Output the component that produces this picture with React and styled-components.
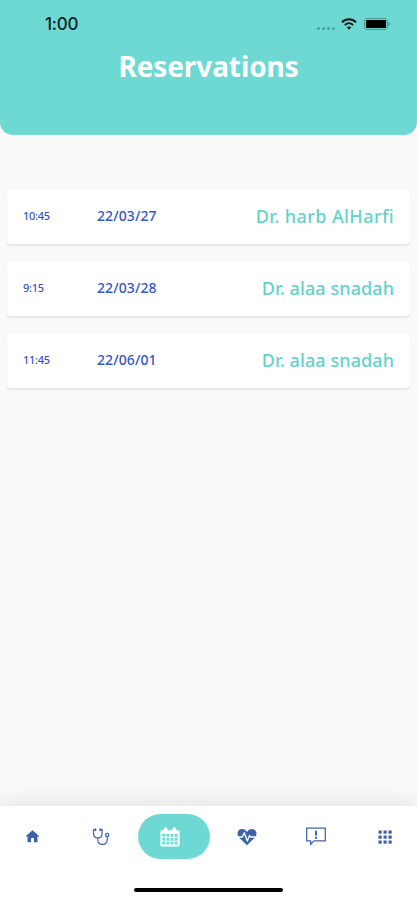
import React from 'react'
import styled, { createGlobalStyle } from 'styled-components'
import { MdHome } from 'react-icons/md'


const reservations = [
  { id: 1, time: '10:45', date: '22/03/27', doctor: 'Dr. harb AlHarfi', spacing: '0.4px' },
  { id: 2, time: '9:15', date: '22/03/28', doctor: 'Dr. alaa snadah', spacing: '0.08px' },
  { id: 3, time: '11:45', date: '22/06/01', doctor: 'Dr. alaa snadah', spacing: '0.08px' },
]

const StethoscopeIcon = () => (
  <svg width="18" height="18" viewBox="0 0 18 18" fill="none" stroke="currentColor" strokeWidth="1.2" strokeLinecap="round">
    <path d="M3.2 1.6H1.5v4c0 2.6 1.8 4.4 4.3 4.4s4.3-1.8 4.3-4.4v-4H8.4" />
    <path d="M5.8 10v2c0 2.7 1.7 4.4 4.7 4.4s4.7-1.7 4.7-4.4V8.6" />
    <circle cx="15.2" cy="7" r="1.6" />
    <path d="M3.5 1v1.5M8.2 1v1.5" strokeWidth="1.6" />
  </svg>
)

const CalendarIcon = () => (
  <svg width="20" height="21" viewBox="0 0 20 21" fill="currentColor">
    <path
      fillRule="evenodd"
      d="M2 4.2h1.600L4.200 2.200a1.700 1.700 0 0 1 3 0l.8 2h4l.8-2a1.700 1.700 0 0 1 3 0l.6 2H18a1.600 1.600 0 0 1 1.600 1.600v13.100a1.600 1.600 0 0 1-1.600 1.600H2A1.600 1.600 0 0 1 .4 18.900V5.800A1.600 1.600 0 0 1 2 4.200zM2.300 8v2.800h3V8zm4.100 0v2.800h3V8zm4.100 0v2.800h3V8zm4.100 0v2.800h3V8zM2.300 11.900v2.800h3v-2.800zm4.100 0v2.800h3v-2.800zm4.100 0v2.800h3v-2.800zm4.100 0v2.800h3v-2.800zM2.300 15.800v2.700h3v-2.700zm4.100 0v2.700h3v-2.700zm4.100 0v2.700h3v-2.700zm4.100 0v2.700h3v-2.700z"
    />
  </svg>
)

const HeartIcon = () => (
  <svg width="20" height="18" viewBox="0 0 20 18">
    <path fill="currentColor" d="M10 17.3 2 9.500C-1 5.800.9 1 5 1c2.200 0 3.900 1 5 3 1.100-2 2.800-3 5-3 4.100 0 6 4.800 3 8.500z" />
    <path fill="none" stroke="#fff" strokeWidth="1.3" strokeLinejoin="round" d="M1 9h4.300l2-4.200 3 8.200 2.200-5.600 1.100 1.600H19" />
  </svg>
)

const MessageIcon = () => (
  <svg width="20" height="19" viewBox="0 0 20 19" fill="none" stroke="currentColor">
    <path d="M.7 1.200h18.600v12.700H8.100L4.600 17.300v-3.400H.7z" strokeWidth="1.2" />
    <path d="M10 3.700v4.800M10 9.800v2" strokeWidth="2" />
  </svg>
)

const AppsIcon = () => (
  <svg width="14" height="14" viewBox="0 0 14 14" fill="currentColor">
    {[0.5, 5.5, 10.5].map((y) => [0.5, 5.5, 10.5].map((x) => (
      <rect key={`${x}-${y}`} x={x} y={y} width="3.2" height="3.2" />
    )))}
  </svg>
)

const WifiIcon = () => (
  <svg width="16" height="12" viewBox="0 0 16 12" fill="none" stroke="#0b1c1d">
    <path d="M1 4.200C5 .3 11 .3 15 4.200" strokeWidth="2" />
    <path d="M3.800 7c2.500-2.300 5.900-2.300 8.400 0" strokeWidth="1.8" />
    <path d="M8 11.700 5.700 9.300c1.300-1.200 3.300-1.200 4.600 0z" fill="#0b1c1d" stroke="none" />
  </svg>
)

const BatteryIcon = () => (
  <svg width="27" height="12" viewBox="0 0 27 12">
    <rect x=".6" y=".6" width="22.8" height="10.8" rx="2.5" fill="none" stroke="#48908d" />
    <rect x="2" y="2" width="20" height="8" rx="1" fill="#000" />
    <path d="M24.600 4c1.800.6 1.800 3.400 0 4z" fill="#48908d" />
  </svg>
)

const App = () => {
  return (
    <>
      <GlobalStyle />
      <Screen>
        <Header>
          <StatusBar>
            <Clock>1:00</Clock>
            <StatusIcons>
              <Signal><i /><i /><i /><i /></Signal>
              <WifiIcon />
              <BatteryIcon />
            </StatusIcons>
          </StatusBar>
          <Title>Reservations</Title>
        </Header>

        <List>
          {reservations.map(({ id, time, date, doctor, spacing }) => (
            <Card key={id}>
              <Time>{time}</Time>
              <DateText>{date}</DateText>
              <Doctor $spacing={spacing}>{doctor}</Doctor>
            </Card>
          ))}
        </List>

        <BottomBar>
          <Tabs>
            <Tab><MdHome size={17} /></Tab>
            <Tab><StethoscopeIcon /></Tab>
            <Tab $active><CalendarIcon /></Tab>
            <Tab><HeartIcon /></Tab>
            <Tab><MessageIcon /></Tab>
            <Tab><AppsIcon /></Tab>
          </Tabs>
          <HomeIndicator />
        </BottomBar>
      </Screen>
    </>
  )
}

export default App


const GlobalStyle = createGlobalStyle`
  * {
    box-sizing:border-box;
  }

  body {
    margin:0;
    background:#fafafa;
    font-family:"Noto Sans", "Open Sans", sans-serif;
  }
`

const Screen = styled.div`
  display:flex;
  flex-direction:column;
  width:417px;
  height:900px;
  background:#fafafa;
  overflow:hidden;
`

const Header = styled.header`
  height:135px;
  background:#6dd9d2;
  border-radius:0 0 13px 13px;
`

const StatusBar = styled.div`
  display:flex;
  justify-content:space-between;
  align-items:center;
  height:48px;
  padding:0 26px 0 45px;
`

const Clock = styled.span`
  font-family:Inter, sans-serif;
  font-size:17px;
  font-weight:500;
  letter-spacing:-0.2px;
  color:#0b2326;
`

const StatusIcons = styled.div`
  display:flex;
  align-items:center;

  svg + svg {
    margin-left:7px;
  }
`

const Signal = styled.span`
  display:flex;
  gap:2px;
  margin:9px 6px 0 0;

  i {
    width:3px;
    height:3px;
    border-radius:50%;
    background:#4fa39f;
  }
`

const Title = styled.h1`
  margin:0;
  font-size:28px;
  font-weight:700;
  line-height:36px;
  letter-spacing:-0.1px;
  text-align:center;
  color:#fff;
`

const List = styled.main`
  flex:1;
  display:flex;
  flex-direction:column;
  gap:18px;
  padding:55px 7px 0;
`

const Card = styled.article`
  display:flex;
  align-items:center;
  height:54px;
  padding:0 16px 2px;
  background:#fff;
  border-radius:4px;
  box-shadow:0 2px 2px rgba(0, 0, 0, 0.07);
`

const Time = styled.span`
  width:74px;
  padding-bottom:2px;
  font-size:11px;
  font-weight:500;
  letter-spacing:-0.3px;
  color:#3458c9;
`

const DateText = styled.span`
  padding-bottom:2px;
  font-size:14px;
  font-weight:500;
  letter-spacing:0.1px;
  color:#3157c8;
`

const Doctor = styled.span`
  margin-left:auto;
  font-size:18px;
  font-weight:500;
  letter-spacing:${({ $spacing }) => $spacing};
  color:#62d3c9;
`

const BottomBar = styled.footer`
  display:flex;
  flex-direction:column;
  align-items:center;
  height:94px;
  padding-top:8px;
  background:#fff;
  box-shadow:0 -2px 24px rgba(0, 0, 0, 0.11);
`

const Tabs = styled.nav`
  display:flex;
  justify-content:space-between;
  width:100%;
`

const Tab = styled.button`
  display:flex;
  justify-content:center;
  align-items:center;
  width:${({ $active }) => ($active ? '72px' : '64px')};
  height:45px;
  padding:0;
  padding-right:${({ $active }) => ($active ? '8px' : '0')};
  border:none;
  border-radius:23px;
  background:${({ $active }) => ($active ? '#6dd9d2' : 'none')};
  color:${({ $active }) => ($active ? '#fff' : '#3d61ab')};
`

const HomeIndicator = styled.div`
  width:149px;
  height:4px;
  margin-top:29px;
  border-radius:2px;
  background:#000;
`
